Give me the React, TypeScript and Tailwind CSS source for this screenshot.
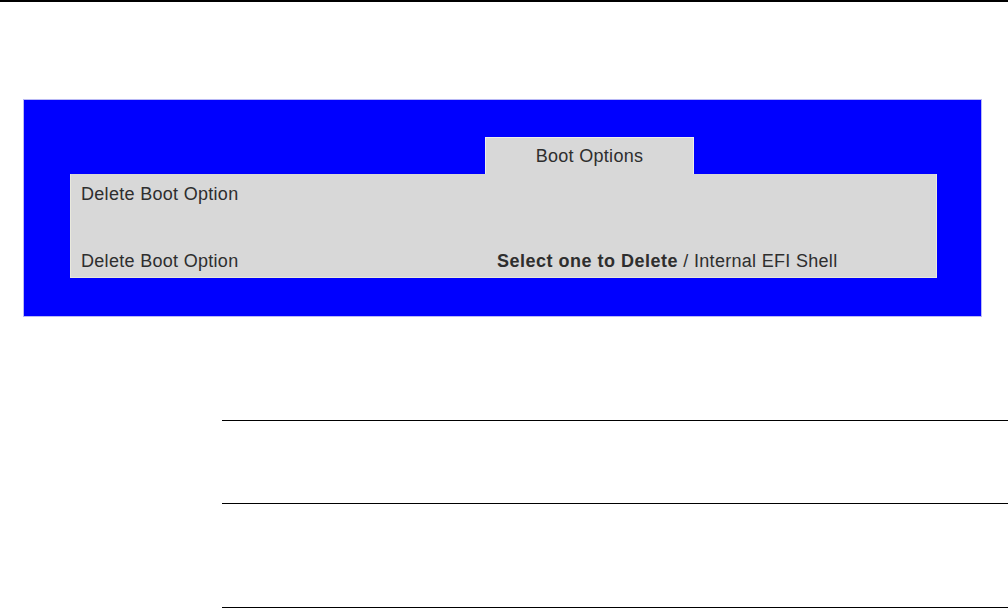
export default function App() {
  const font = { fontFamily: '"Liberation Sans", Arial, sans-serif' };

  return (
    <div className="w-[1008px] h-[608px] bg-white overflow-hidden flex flex-col" style={font}>
      <div className="h-[2px] bg-black" />

      {/* blue setup screen */}
      <div className="ml-[23px] mt-[97px] w-[959px] h-[218px] bg-[#0000ff] border border-[#b9b9f5] flex flex-col">
        <div className="ml-[461px] mt-[37px] w-[209px] h-[37px] bg-[#d8d8d8] border-t border-l border-r border-[#eeeeea] flex items-center justify-center text-[18px] tracking-[0.3px] text-[#2e2e2e]">
          Boot Options
        </div>
        <div className="ml-[46px] w-[867px] h-[104px] bg-[#d8d8d8] border border-[#e9e9dc] border-t-0 flex flex-col text-[18px] tracking-[0.3px] text-[#2e2e2e]">
          <div className="flex mt-[9px] h-[22px] items-center">
            <span className="ml-[10px]">Delete Boot Option</span>
          </div>
          <div className="flex mt-[45px] h-[22px] items-center">
            <span className="ml-[10px] w-[416px]">Delete Boot Option</span>
            <span>
              <b className="tracking-[0.5px]">Select one to Delete</b> / Internal EFI Shell
            </span>
          </div>
        </div>
      </div>

      {/* rule lines */}
      <div className="ml-[222px] mt-[103px] h-px bg-black" />
      <div className="ml-[222px] mt-[82px] h-px bg-black" />
      <div className="ml-[222px] mt-[103px] h-px bg-black" />
    </div>
  );
}
